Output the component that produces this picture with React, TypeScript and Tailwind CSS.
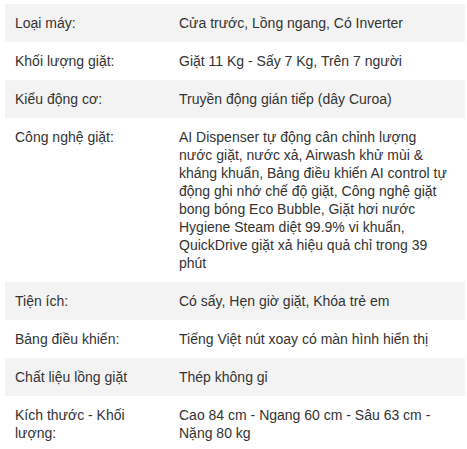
import React from "react";

const rows: [string, string[]][] = [
  ["Loại máy:", ["Cửa trước, Lồng ngang, Có Inverter"]],
  ["Khối lượng giặt:", ["Giặt 11 Kg - Sấy 7 Kg, Trên 7 người"]],
  ["Kiểu động cơ:", ["Truyền động gián tiếp (dây Curoa)"]],
  [
    "Công nghệ giặt:",
    [
      "AI Dispenser tự động cân chỉnh lượng",
      "nước giặt, nước xả, Airwash khử mùi &",
      "kháng khuẩn, Bảng điều khiển AI control tự",
      "động ghi nhớ chế độ giặt, Công nghệ giặt",
      "bong bóng Eco Bubble, Giặt hơi nước",
      "Hygiene Steam diệt 99.9% vi khuẩn,",
      "QuickDrive giặt xả hiệu quả chỉ trong 39",
      "phút",
    ],
  ],
  ["Tiện ích:", ["Có sấy, Hẹn giờ giặt, Khóa trẻ em"]],
  ["Bảng điều khiển:", ["Tiếng Việt nút xoay có màn hình hiển thị"]],
  ["Chất liệu lồng giặt", ["Thép không gỉ"]],
  ["Kích thước - Khối lượng:", ["Cao 84 cm - Ngang 60 cm - Sâu 63 cm -", "Nặng 80 kg"]],
];

export default function App() {
  return (
    <div
      className="bg-white pt-[4px] pl-[5px] w-[467px] h-[449px] overflow-hidden text-[14px] leading-[18px] text-[#333333]"
      style={{ fontFamily: '"Liberation Sans", Arial, sans-serif' }}
    >
      <div className="w-[460px] flex flex-col">
        {rows.map(([k, v], i) => (
          <div
            key={k}
            className={`flex ${i % 2 === 0 ? "bg-[#f3f3f3]" : "bg-white"}`}
          >
            <div className="w-[164px] shrink-0 px-[10px] py-[10px]">{k}</div>
            <div className="flex-1 px-[10px] py-[10px]">
              {v.map((line, j) => (
                <div key={j} className="whitespace-nowrap">
                  {line}
                </div>
              ))}
            </div>
          </div>
        ))}
      </div>
    </div>
  );
}
